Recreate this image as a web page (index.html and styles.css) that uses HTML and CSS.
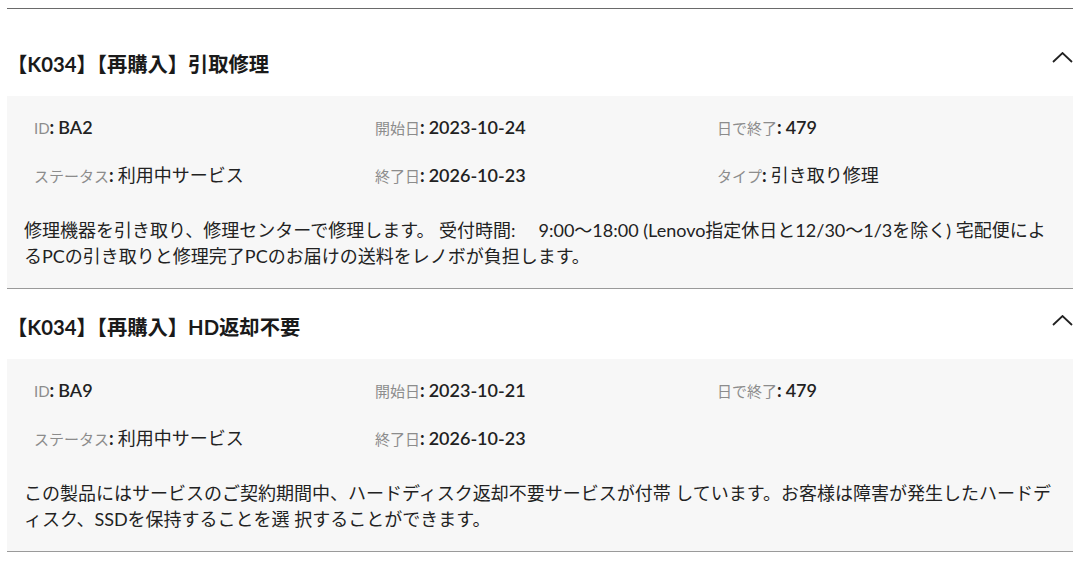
FILE: index.html
```html
<!DOCTYPE html>
<html lang="ja">
<head>
<meta charset="utf-8">
<link rel="stylesheet" href="styles.css">
</head>
<body>
<div class="list">
  <section class="item">
    <div class="item-head">
      <h3 class="item-title">【K034】【再購入】引取修理</h3>
      <svg class="chevron" width="21" height="11" viewBox="0 0 21 11"><polyline points="1,10 10.5,1 20,10" fill="none" stroke="#222" stroke-width="1.8"/></svg>
    </div>
    <div class="item-body">
      <div class="fields">
        <div class="field"><span class="label">ID</span><span class="colon">:</span><span class="value">BA2</span></div>
        <div class="field"><span class="label">開始日</span><span class="colon">:</span><span class="value">2023-10-24</span></div>
        <div class="field"><span class="label">日で終了</span><span class="colon">:</span><span class="value">479</span></div>
        <div class="field"><span class="label">ステータス</span><span class="colon">:</span><span class="value jp">利用中サービス</span></div>
        <div class="field"><span class="label">終了日</span><span class="colon">:</span><span class="value">2026-10-23</span></div>
        <div class="field"><span class="label">タイプ</span><span class="colon">:</span><span class="value jp">引き取り修理</span></div>
      </div>
      <p class="desc">修理機器を引き取り、修理センターで修理します。 受付時間: &nbsp;&nbsp;&nbsp;&nbsp;9:00～18:00 (Lenovo指定休日と12/30～1/3を除く) 宅配便によるPCの引き取りと修理完了PCのお届けの送料をレノボが負担します。</p>
    </div>
  </section>
  <section class="item">
    <div class="item-head">
      <h3 class="item-title">【K034】【再購入】HD返却不要</h3>
      <svg class="chevron" width="21" height="11" viewBox="0 0 21 11"><polyline points="1,10 10.5,1 20,10" fill="none" stroke="#222" stroke-width="1.8"/></svg>
    </div>
    <div class="item-body">
      <div class="fields">
        <div class="field"><span class="label">ID</span><span class="colon">:</span><span class="value">BA9</span></div>
        <div class="field"><span class="label">開始日</span><span class="colon">:</span><span class="value">2023-10-21</span></div>
        <div class="field"><span class="label">日で終了</span><span class="colon">:</span><span class="value">479</span></div>
        <div class="field"><span class="label">ステータス</span><span class="colon">:</span><span class="value jp">利用中サービス</span></div>
        <div class="field"><span class="label">終了日</span><span class="colon">:</span><span class="value">2026-10-23</span></div>
      </div>
      <p class="desc">この製品にはサービスのご契約期間中、ハードディスク返却不要サービスが付帯 しています。お客様は障害が発生したハードディスク、SSDを保持することを選 択することができます。</p>
    </div>
  </section>
</div>
</body>
</html>
```

FILE: styles.css
```css
html, body {
  margin: 0;
  padding: 0;
  background: #fff;
}
body {
  font-family: Lato, "Noto Sans CJK JP", sans-serif;
  color: #222;
}
.list {
  margin: 8px 7px 0 7px;
  border-top: 1px solid #6a6a6a;
  padding-top: 17px;
}
.item + .item {
  border-top: 1px solid #9a9a9a;
}
.item:last-child {
  border-bottom: 1px solid #9a9a9a;
}
.item-head {
  display: flex;
  justify-content: space-between;
  align-items: flex-start;
  padding: 26px 0 20px 0;
}
.item-title {
  margin: 0;
  font-size: 20.3px;
  line-height: 24px;
  font-weight: 700;
  color: #1a1a1a;
}
.chevron {
  display: block;
  margin-top: 0;
}
.item-body {
  background: #f7f7f7;
  padding: 19px 18px 19px 17px;
}
.fields {
  display: grid;
  grid-template-columns: 341px 342px 1fr;
  row-gap: 23px;
  padding-left: 10px;
}
.field {
  line-height: 24px;
  font-size: 18px;
}
.label {
  color: #8c8c8c;
  font-size: 15px;
}
.colon {
  color: #222;
  font-weight: 700;
  margin-right: 4px;
}
.value {
  color: #222;
  font-weight: 600;
}
.value.jp {
  font-weight: 400;
  font-size: 18px;
}
.desc {
  margin: 29px 0 0 0;
  font-size: 18px;
  line-height: 26px;
  color: #222;
}
```
